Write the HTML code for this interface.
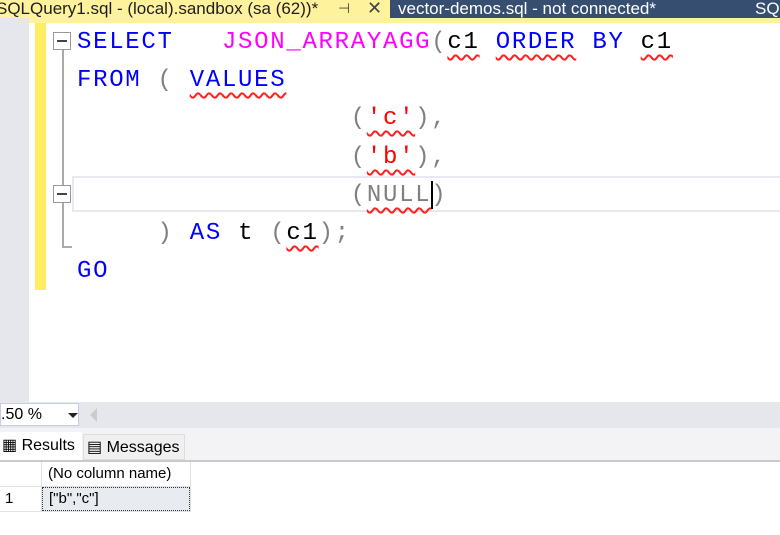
<!DOCTYPE html><html><head><style>
body{margin:0;width:780px;height:535px;overflow:hidden;background:#fff;font-family:"Liberation Sans",sans-serif;position:relative}
.a{position:absolute}
.code{font-family:"Liberation Mono",monospace;font-size:24px;letter-spacing:1.7px;white-space:pre;height:38px;line-height:38px;left:77px}
.k{color:#0000ff}.f{color:#ff00ff}.g{color:#808080}.s{color:#ff0000}.t{color:#000}
.w{text-decoration:underline wavy #ff2020;text-decoration-thickness:1.5px;text-underline-offset:6px;text-decoration-skip-ink:none}
.box{width:16px;height:16px;border:1px solid #999;background:#fff}
.box:after{content:"";position:absolute;left:3px;top:7px;width:10px;height:2px;background:#444}
</style></head><body>
<div class="a" style="left:-4px;top:0;width:394px;height:18px;background:#fff29d;font-size:17px;line-height:17px;color:#1e1e1e;white-space:nowrap;overflow:hidden">SQLQuery1.sql - (local).sandbox (sa (62))*</div>
<div class="a" style="left:338px;top:0;font-size:14px;line-height:16px;color:#444">⊣</div>
<div class="a" style="left:367px;top:-2px;font-size:18px;color:#444">✕</div>
<div class="a" style="left:390px;top:0;width:390px;height:18px;background:#364e6f"></div>
<div class="a" style="left:398px;top:0;font-size:17px;line-height:17px;color:#fff;white-space:nowrap">vector-demos.sql - not connected*</div>
<div class="a" style="left:755px;top:0;font-size:17px;line-height:17px;color:#fff">SQ</div>
<div class="a" style="left:0;top:18px;width:780px;height:5px;background:#fff29d"></div>
<div class="a" style="left:0;top:18px;width:29px;height:384px;background:#e6e7ed"></div>
<div class="a" style="left:35px;top:23px;width:11px;height:267px;background:#ffee62"></div>
<div class="a" style="left:72px;top:176px;width:708px;height:36px;border:2px solid #e8e8f0;border-right:none;box-sizing:border-box"></div>
<div class="a" style="left:62px;top:50px;width:2px;height:135px;background:#aaa"></div>
<div class="a" style="left:62px;top:203px;width:2px;height:45px;background:#aaa"></div>
<div class="a" style="left:62px;top:246px;width:10px;height:2px;background:#aaa"></div>
<div class="a box" style="left:53px;top:32px"></div>
<div class="a box" style="left:53px;top:185px"></div>
<div class="a code" style="top:24px"><span class="k">SELECT</span>   <span class="f">JSON_ARRAYAGG</span><span class="g">(</span><span class="t w">c1</span> <span class="k w">ORDER</span> <span class="k">BY</span> <span class="t w">c1</span></div>
<div class="a code" style="top:62px"><span class="k">FROM</span> <span class="g">(</span> <span class="k w">VALUES</span></div>
<div class="a code" style="top:100px">                 <span class="g">(</span><span class="s w">'c'</span><span class="g">),</span></div>
<div class="a code" style="top:139px">                 <span class="g">(</span><span class="s w">'b'</span><span class="g">),</span></div>
<div class="a code" style="top:177px">                 <span class="g">(<span class="w">NULL</span>)</span></div>
<div class="a" style="left:431px;top:181px;width:2px;height:28px;background:#000"></div>
<div class="a code" style="top:215px">     <span class="g">)</span> <span class="k">AS</span> <span class="t">t</span> <span class="g">(</span><span class="t w">c1</span><span class="g">);</span></div>
<div class="a code" style="top:253px"><span class="k">GO</span></div>
<div class="a" style="left:0;top:402px;width:780px;height:26px;background:#e6e7ed"></div>
<div class="a" style="left:0;top:403px;width:79px;height:23px;background:#fff;border:1px solid #c5cde0;box-sizing:border-box;font-size:16px;line-height:22px">.50 %</div>
<div class="a" style="left:68px;top:413px;border-left:5px solid transparent;border-right:5px solid transparent;border-top:5px solid #222"></div>
<div class="a" style="left:90px;top:408px;border-top:7px solid transparent;border-bottom:7px solid transparent;border-right:7px solid #ccc"></div>
<div class="a" style="left:0;top:428px;width:780px;height:32px;background:#f3f3f5"></div>
<div class="a" style="left:0;top:432px;width:82px;height:29px;background:#fff;font-size:16px;line-height:28px;padding-left:2px;box-sizing:border-box">▦ Results</div>
<div class="a" style="left:83px;top:434px;width:102px;height:26px;background:#f0f0f0;border:1px solid #ddd;font-size:16px;line-height:26px;padding-left:3px;box-sizing:border-box">▤ Messages</div>
<div class="a" style="left:0;top:460px;width:780px;height:2px;background:#c9c9d0"></div>
<div class="a" style="left:0;top:462px;width:190px;height:50px;border-right:1px solid #e2e2e2"></div>
<div class="a" style="left:41px;top:462px;width:1px;height:50px;background:#e2e2e2"></div>
<div class="a" style="left:0;top:486px;width:190px;height:1px;background:#e2e2e2"></div>
<div class="a" style="left:0;top:511px;width:190px;height:1px;background:#e2e2e2"></div>
<div class="a" style="left:48px;top:465px;font-size:15px">(No column name)</div>
<div class="a" style="left:5px;top:490px;font-size:15px">1</div>
<div class="a" style="left:42px;top:487px;width:148px;height:24px;background:#e8ecf0;border:1px dotted #333;box-sizing:border-box;font-size:15px;line-height:22px;padding-left:6px">["b","c"]</div>
</body></html>
